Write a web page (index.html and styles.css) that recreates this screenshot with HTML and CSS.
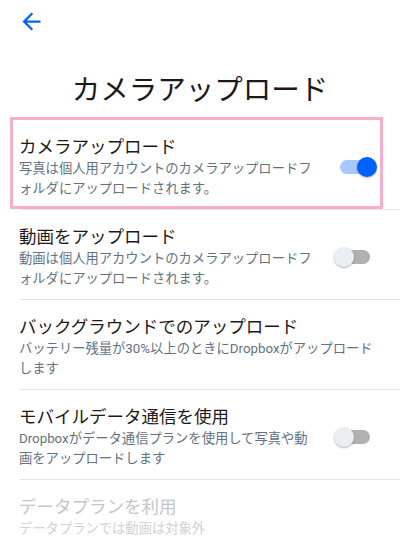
FILE: index.html
```html
<!DOCTYPE html>
<html lang="ja">
<head>
  <meta charset="UTF-8">
  <title>カメラアップロード</title>
  <meta name="viewport" content="width=device-width, initial-scale=1.0">
  <link rel="stylesheet" href="styles.css">
</head>
<body>
  <div class="topbar">
    <svg class="btn-voltar" viewBox="0 0 24 24" width="27" height="27">
      <path d="M20 11H7.83l5.59-5.59L12 4l-8 8 8 8 1.41-1.41L7.83 13H20v-2z" fill="#0061fe"/>
    </svg>
  </div>

  <h1 class="titulo">カメラアップロード</h1>

  <div class="opcao destaque">
    <div class="texto">
      <div class="nome">カメラアップロード</div>
      <div class="desc">写真は個人用アカウントのカメラアップロードフ<br>ォルダにアップロードされます。</div>
    </div>
    <div class="switch on"><span class="knob"></span></div>
  </div>

  <div class="opcao">
    <div class="texto">
      <div class="nome">動画をアップロード</div>
      <div class="desc">動画は個人用アカウントのカメラアップロードフ<br>ォルダにアップロードされます。</div>
    </div>
    <div class="switch"><span class="knob"></span></div>
  </div>

  <div class="opcao">
    <div class="texto">
      <div class="nome">バックグラウンドでのアップロード</div>
      <div class="desc">バッテリー残量が30%以上のときにDropboxがアップロード<br>します</div>
    </div>
  </div>

  <div class="opcao">
    <div class="texto">
      <div class="nome">モバイルデータ通信を使用</div>
      <div class="desc">Dropboxがデータ通信プランを使用して写真や動<br>画をアップロードします</div>
    </div>
    <div class="switch"><span class="knob"></span></div>
  </div>

  <div class="opcao desativado">
    <div class="texto">
      <div class="nome">データプランを利用</div>
      <div class="desc">データプランでは動画は対象外</div>
    </div>
  </div>
</body>
</html>
```

FILE: styles.css
```css
body {
  font-family: Roboto, "Noto Sans CJK JP", sans-serif;
  margin: 0;
  padding: 0;
  background: #fff;
  color: #1e1919;
  overflow: hidden;
}

.topbar {
  height: 44px;
  padding: 8px 0 0 18px;
  box-sizing: border-box;
}

.btn-voltar {
  display: block;
}

.titulo {
  margin: 0;
  padding: 27px 0 9px;
  font-size: 28.5px;
  font-weight: normal;
  line-height: 40px;
  text-align: center;
}

.opcao {
  display: flex;
  align-items: center;
  margin-left: 19px;
  padding: 15px 0 10px;
  border-bottom: 1px solid #e6e6e6;
  position: relative;
}

.opcao .texto {
  flex: 1;
}

.nome {
  font-size: 17.5px;
  line-height: 24px;
  white-space: nowrap;
}

.desc {
  font-size: 13.3px;
  line-height: 20px;
  color: #637282;
  white-space: nowrap;
}

.destaque::after {
  content: "";
  position: absolute;
  top: -3px;
  bottom: 0;
  left: -9px;
  right: 17px;
  border: 3px solid #f8aec8;
}

.desativado {
  border-bottom: none;
}

.desativado .nome {
  color: #c6c6c6;
}

.desativado .desc {
  color: #d2d2d2;
}

.switch {
  width: 30px;
  height: 14px;
  border-radius: 7px;
  background: #b1b1b1;
  margin-right: 30px;
  position: relative;
}

.switch .knob {
  position: absolute;
  top: -3px;
  left: -6px;
  width: 20px;
  height: 20px;
  border-radius: 50%;
  background: #eceff1;
  box-shadow: 0 1px 2px rgba(0, 0, 0, 0.3);
}

.switch.on {
  background: #a9c7ff;
}

.switch.on .knob {
  left: 17px;
  background: #0061fe;
}
```
